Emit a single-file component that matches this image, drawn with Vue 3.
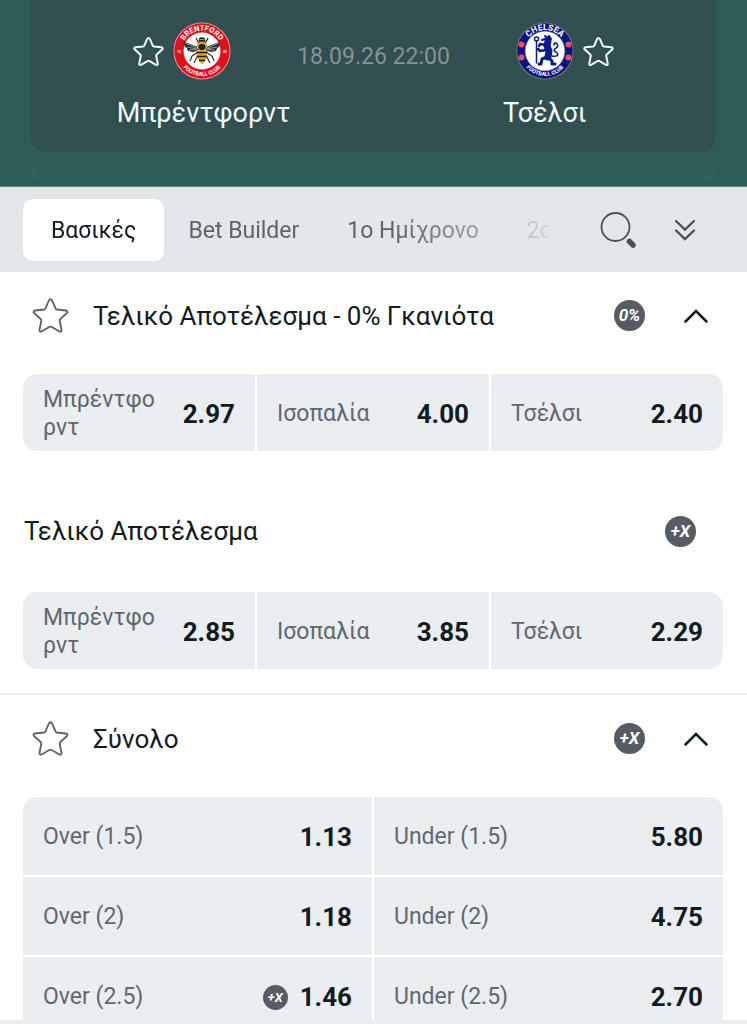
<!-- MatchMarkets.vue -->
<script setup>
import { ref } from 'vue';

const activeTab = ref('main');
const starPath = 'M18 2.2c.9 0 1.4.8 1.8 1.7l3.1 7.2c.3.7.8 1 1.5 1.1l8.6.9c1.5.2 2 1.6.9 2.6l-6.3 5.7c-.6.5-.8 1.1-.6 1.9l1.7 8.6c.3 1.5-.8 2.3-2.1 1.6L19.300 29.200c-.9-.5-1.700-.5-2.600 0l-7.300 4.300c-1.300.7-2.400-.1-2.100-1.600L9 23.300c.2-.8 0-1.400-.6-1.900l-6.300-5.700c-1.100-1-.6-2.400.9-2.600l8.600-.9c.7-.1 1.200-.4 1.500-1.100l3.100-7.200c.4-.9.9-1.700 1.800-1.700z';

const tabs = [
  { id: 'main', label: 'Βασικές' },
  { id: 'builder', label: 'Bet Builder' },
  { id: 'half1', label: '1ο Ημίχρονο' },
  { id: 'half2', label: '2ο Ημίχρονο' }
];

const markets = ref([
  {
    id: 'result',
    open: true,
    groups: [
      {
        title: 'Τελικό Αποτέλεσμα - 0% Γκανιότα',
        badge: '0%',
        columns: 3,
        odds: [
          { label: 'Μπρέντφορντ', value: '2.97' },
          { label: 'Ισοπαλία', value: '4.00' },
          { label: 'Τσέλσι', value: '2.40' }
        ]
      },
      {
        title: 'Τελικό Αποτέλεσμα',
        badge: '+X',
        columns: 3,
        odds: [
          { label: 'Μπρέντφορντ', value: '2.85' },
          { label: 'Ισοπαλία', value: '3.85' },
          { label: 'Τσέλσι', value: '2.29' }
        ]
      }
    ]
  },
  {
    id: 'total',
    open: true,
    groups: [
      {
        title: 'Σύνολο',
        badge: '+X',
        columns: 2,
        odds: [
          { label: 'Over (1.5)', value: '1.13' },
          { label: 'Under (1.5)', value: '5.80' },
          { label: 'Over (2)', value: '1.18' },
          { label: 'Under (2)', value: '4.75' },
          { label: 'Over (2.5)', value: '1.46', badge: '+X' },
          { label: 'Under (2.5)', value: '2.70' }
        ]
      }
    ]
  }
]);
</script>



<template>
  <div class="page">
    <header class="hero">
      <div class="match-card">
        <div class="team">
          <div class="team-top">
            <button class="icon-btn team-star" aria-label="Αγαπημένα">
              <svg viewBox="0 0 36 36"><path :d="starPath" /></svg>
            </button>
            <svg class="crest" viewBox="0 0 58 58">
              <defs>
                <path id="bTop" d="M8.500 29a20.500 20.500 0 0 1 41 0" />
                <path id="bBottom" d="M4 29a25 25 0 0 0 50 0" />
              </defs>
              <circle cx="29" cy="29" r="28.500" fill="#f0a3a5" />
              <circle cx="29" cy="29" r="27.700" fill="#e30f1d" />
              <circle cx="29" cy="29" r="18.500" fill="#fff" />
              <text class="crest-text" font-size="7.500"><textPath href="#bTop" startOffset="50%" text-anchor="middle">BRENTFORD</textPath></text>
              <text class="crest-text" font-size="5.500"><textPath href="#bBottom" startOffset="50%" text-anchor="middle">FOOTBALL CLUB</textPath></text>
              <text class="crest-text" x="6" y="30.500" font-size="3" text-anchor="middle">18</text>
              <text class="crest-text" x="52" y="30.500" font-size="3" text-anchor="middle">89</text>
              <!-- bee -->
              <path d="M25 25L10.500 19.500l1 4.500 2.500 2.500 1 2.500 5 1 6-2zM33 25l14.500-5.500-1 4.500-2.500 2.500-1 2.500-5 1-6-2z" fill="#29292b" />
              <path d="M12 21l12 5M14 25l10 2M16 28l8-.5M46 21l-12 5M44 25l-10 2M42 28l-8-.5" stroke="#aeb2b5" stroke-width=".8" />
              <path d="M26 22l-3-6M32 22l3-6M25 30l-6 4-2 5M33 30l6 4 2 5M25 33l-4 8M33 33l4 8" fill="none" stroke="#202022" stroke-width="1.100" />
              <ellipse cx="29" cy="18.500" rx="3.300" ry="3.200" fill="#2b241c" />
              <path d="M26.500 17.500h5" stroke="#b98b22" />
              <ellipse cx="29" cy="24.500" rx="5.200" ry="5" fill="#d7a326" />
              <ellipse cx="29" cy="25" rx="3.500" ry="3" fill="#1c1b19" />
              <path d="M23.800 29h10.400c1.300 5-1.700 10-5.200 13.500C25.500 39 22.500 34 23.800 29z" fill="#dba722" />
              <path d="M23.500 30.500h11M24 34.500h10M26 38.500h6" stroke="#211d17" stroke-width="1.500" />
            </svg>
          </div>
          <div class="team-name">Μπρέντφορντ</div>
        </div>
        <time class="kickoff">18.09.26 22:00</time>
        <div class="team">
          <div class="team-top">
            <svg class="crest crest-away" viewBox="0 0 58 58">
              <defs>
                <path id="cTop" d="M8 29a21 21 0 0 1 42 0" />
                <path id="cBottom" d="M4 29a25 25 0 0 0 50 0" />
              </defs>
              <circle cx="29" cy="29" r="28.500" fill="#8e8250" />
              <circle cx="29" cy="29" r="27.700" fill="#061489" />
              <circle cx="29" cy="29" r="19.800" fill="#fff" stroke="#9a9270" stroke-width=".5" />
              <text class="crest-text" font-size="8.500"><textPath href="#cTop" startOffset="50%" text-anchor="middle">CHELSEA</textPath></text>
              <text class="crest-text" font-size="5.500"><textPath href="#cBottom" startOffset="50%" text-anchor="middle">FOOTBALL CLUB</textPath></text>
              <g fill="#ea5260">
                <circle cx="5.500" cy="22.500" r="3" />
                <circle cx="5.500" cy="35.500" r="3" />
                <circle cx="52.500" cy="22.500" r="3" />
                <circle cx="52.500" cy="35.500" r="3" />
              </g>
              <!-- lion with staff -->
              <g fill="none" stroke="#0a1b8c" stroke-linecap="round" stroke-linejoin="round">
                <path d="M20.500 19v22" stroke-width="1.500" />
                <circle cx="20.500" cy="17" r="2" stroke-width="1.500" />
                <path d="M32 19l-1 5 2 5-1 6" stroke-width="7" />
                <path d="M30 23l-6-1-1 2M30 28l-6 1-2-2" stroke-width="2.500" />
                <path d="M31 35l-5 2-1 5h-2M33 36l3 3v3h3" stroke-width="3" />
                <path d="M29 17l-3 1M29 14l2 2 2-2 2 3" stroke-width="2" />
                <path d="M36 34c5 1 7-1 5-3s-4-2-2-4 4-3 2-5-3-1-3 1" stroke-width="1.600" />
              </g>
            </svg>
            <button class="icon-btn team-star away-star" aria-label="Αγαπημένα">
              <svg viewBox="0 0 36 36"><path :d="starPath" /></svg>
            </button>
          </div>
          <div class="team-name">Τσέλσι</div>
        </div>
      </div>
      <div class="next-card"></div>
    </header>

    <nav class="tab-bar">
      <div class="tabs">
        <button
          v-for="tab in tabs"
          :key="tab.id"
          :class="['tab', { active: activeTab === tab.id }]"
          @click="activeTab = tab.id"
        >{{ tab.label }}</button>
      </div>
      <button class="icon-btn search-btn" aria-label="Αναζήτηση">
        <svg viewBox="0 0 36 36">
          <circle cx="15.500" cy="15" r="14" fill="none" stroke="#4b5257" stroke-width="1.800" />
          <path d="M29.500 29.500l3.500 3.500" stroke="#4b5257" stroke-width="5.500" stroke-linecap="round" />
        </svg>
      </button>
      <button class="icon-btn expand-btn" aria-label="Ανάπτυξη όλων">
        <svg viewBox="0 0 20 22">
          <path d="M1 2l9 8.500L19 2M1 11.500L10 20l9-8.500" fill="none" stroke="#4b5257" stroke-width="2.400" stroke-linecap="round" />
        </svg>
      </button>
    </nav>

    <main class="markets">
      <section v-for="market in markets" :key="market.id" class="market">
        <template v-for="(group, index) in market.groups" :key="group.title">
          <div v-if="market.open || index === 0" class="group">
            <div :class="['group-header', { sub: index > 0 }]">
              <button v-if="index === 0" class="icon-btn market-star" aria-label="Αγαπημένα">
                <svg viewBox="0 0 36 36"><path :d="starPath" /></svg>
              </button>
              <h2 class="group-title">{{ group.title }}</h2>
              <span :class="['badge', { percent: group.badge === '0%' }]">{{ group.badge }}</span>
              <button
                v-if="index === 0"
                class="icon-btn toggle"
                aria-label="Σύμπτυξη"
                @click="market.open = !market.open"
              >
                <svg viewBox="0 0 24 14">
                  <path d="M1.500 12.500L12 2l10.500 10.500" fill="none" stroke="#121b21" stroke-width="2.500" stroke-linecap="round" />
                </svg>
              </button>
            </div>
            <div v-if="market.open" :class="['odds', 'odds-' + group.columns]">
              <button v-for="odd in group.odds" :key="odd.label" class="odd">
                <span class="odd-label">{{ odd.label }}</span>
                <span v-if="odd.badge" class="badge small">{{ odd.badge }}</span>
                <span class="odd-value">{{ odd.value }}</span>
              </button>
            </div>
          </div>
        </template>
      </section>
    </main>

    <div class="bottom-sheet"></div>
  </div>
</template>



<style>
body {
  margin: 0;
  background: #fff;
}
</style>

<style scoped>
.page {
  height: 100vh;
  overflow: hidden;
  display: flex;
  flex-direction: column;
  position: relative;
  font-family: Roboto, "Liberation Sans", sans-serif;
  color: #121b21;
}

button {
  border: 0;
  padding: 0;
  background: none;
  font: inherit;
  color: inherit;
  cursor: pointer;
}

svg {
  display: block;
}

.icon-btn svg {
  width: 100%;
  height: 100%;
}

.hero {
  flex: none;
  padding: 0 31px 6px;
  background: #2d5c59;
  border-bottom: 1px solid #5f8481;
}

.match-card {
  display: grid;
  grid-template-columns: repeat(3, 25%);
  justify-content: center;
  height: 152px;
  border-radius: 0 0 14px 14px;
  background: #314e50;
}

/* only the lower corners of the card behind stay visible */
.next-card {
  box-sizing: border-box;
  height: 28px;
  border: 1px solid #47706c;
  border-top: 0;
  border-radius: 0 0 14px 14px;
  mask-image:
    radial-gradient(circle 12px at 2px 100%, #000 60%, transparent),
    radial-gradient(circle 12px at calc(100% - 2px) 100%, #000 60%, transparent);
}

.team {
  padding-top: 22px;
}

.team-top {
  display: grid;
  grid-template-columns: 1fr auto 1fr;
  align-items: center;
  gap: 9px;
}

.crest {
  width: 58px;
  height: 58px;
}

.crest-away {
  grid-column: 2;
}

.crest-text {
  font-family: Roboto, sans-serif;
  font-weight: 700;
  fill: #fff;
}

.team-star {
  width: 31px;
  height: 31px;
  justify-self: end;
}

.away-star {
  justify-self: start;
}

.team-star path {
  fill: none;
  stroke: #f0fbfb;
  stroke-width: 2.3;
}

.team-name {
  margin-top: 17px;
  font-size: 27px;
  line-height: 32px;
  text-align: center;
  white-space: nowrap;
  color: #effbfc;
}

.kickoff {
  margin-top: 43px;
  font-size: 23px;
  line-height: 28px;
  text-align: center;
  white-space: nowrap;
  color: #819594;
}

.tab-bar {
  flex: none;
  display: flex;
  align-items: center;
  height: 85px;
  padding: 0 52px 0 23px;
  background: #e2e8ea;
}

.tabs {
  flex: 1;
  min-width: 0;
  display: flex;
  overflow: hidden;
  mask-image: linear-gradient(90deg, #000 70%, transparent 105%);
}

.tab {
  flex: none;
  height: 62px;
  padding: 2px 24px 0;
  border-radius: 10px;
  font-size: 23px;
  color: #5d6569;
}

.tab.active {
  padding: 2px 28px 0;
  background: #fff;
  color: #121b21;
}

.search-btn {
  width: 36px;
  height: 36px;
  margin-left: 52px;
}

.expand-btn {
  width: 20px;
  height: 22px;
  margin-left: 39px;
}

.markets {
  flex: 1;
  min-height: 0;
  overflow: hidden;
}

.market {
  padding-bottom: 24px;
}

.market + .market {
  border-top: 2px solid #eceef0;
}

.group-header {
  display: flex;
  align-items: center;
  height: 87px;
  padding: 0 39px 0 32px;
}

.group-header.sub {
  height: 92px;
  margin-top: 34px;
  padding: 0 51px 0 24px;
}

.market-star {
  width: 37px;
  height: 37px;
  margin-right: 24px;
}

.market-star path {
  fill: none;
  stroke: #5b6268;
  stroke-width: 1.8;
}

.group-title {
  flex: 1;
  margin: 0;
  font-size: 26px;
  line-height: 32px;
  font-weight: 400;
}

.badge {
  flex: none;
  width: 31px;
  height: 31px;
  border-radius: 50%;
  background: #555c63;
  color: #fff;
  font-size: 17px;
  line-height: 31px;
  font-weight: 700;
  font-style: italic;
  text-align: center;
}

.badge.percent {
  font-size: 17px;
}

.badge.small {
  width: 25px;
  height: 25px;
  margin-right: 12px;
  font-size: 13px;
  line-height: 25px;
}

.toggle {
  width: 24px;
  height: 14px;
  margin-left: 39px;
}

.odds {
  display: grid;
  gap: 2px;
  margin: 15px 24px 0 23px;
  border-radius: 14px;
  overflow: hidden;
}

.odds-3 {
  grid-template-columns: repeat(3, 1fr);
}

.odds-2 {
  grid-template-columns: repeat(2, 1fr);
}

.odd {
  display: flex;
  align-items: center;
  height: 77px;
  padding: 2px 20px 0;
  background: #eaeef1;
  text-align: left;
}

.odds-2 .odd {
  height: 78px;
}

.odd-label {
  flex: 1;
  min-width: 0;
  margin-right: 18px;
  font-size: 23px;
  line-height: 28px;
  word-break: break-all;
  color: #61686d;
}

.odd-value {
  font-size: 26px;
  font-weight: 700;
}

.bottom-sheet {
  position: absolute;
  left: 0;
  right: 0;
  bottom: 0;
  height: 4px;
  background: #eceeee;
}
</style>
